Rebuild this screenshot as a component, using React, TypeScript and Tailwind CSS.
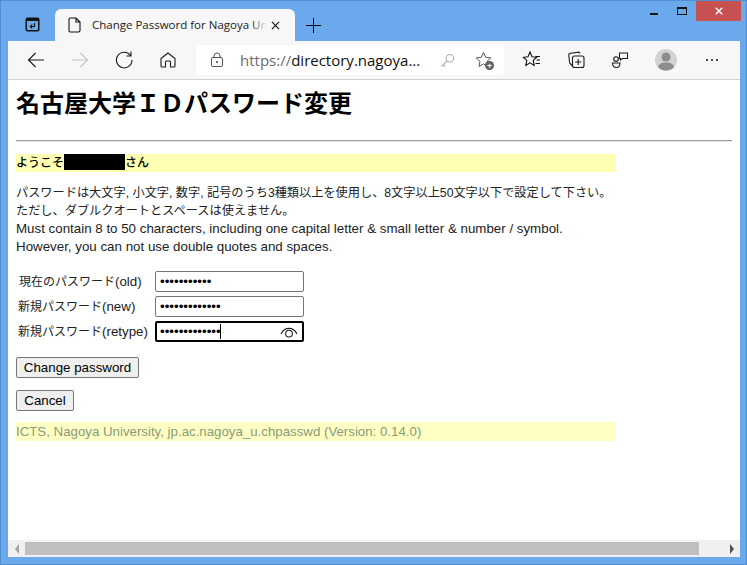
const uiFont = { fontFamily: '"Open Sans", "Noto Sans", sans-serif' };

const Icon = ({ children, className = "w-5 h-5" }: { children: React.ReactNode; className?: string }) => (
  <svg viewBox="0 0 20 20" fill="none" stroke="currentColor" strokeWidth="1.1" className={className}>
    {children}
  </svg>
);

const ToolButton = ({ children, className = "" }: { children: React.ReactNode; className?: string }) => (
  <div className={`flex h-[30px] w-[44px] shrink-0 items-center justify-center text-[#1c1c1c] ${className}`}>{children}</div>
);

const PasswordRow = ({ label, tag, length, focused, indent }: { label: string; tag: string; length: number; focused?: boolean; indent: string }) => (
  <div className="flex h-[25px] items-center">
    <label className={`w-[139px] text-[12px] whitespace-nowrap text-[#222] ${indent}`}>
      {label}
      <span className="text-[13.33px]">{tag}</span>
    </label>
    <div className="relative">
      <input
        type="password"
        readOnly
        value={"x".repeat(length)}
        className={`block h-[21px] w-[149px] rounded-[2px] bg-white px-[4px] text-[13.33px] text-black outline-none ${
          focused ? "border-2 border-black pl-[3px]" : "border border-[#767676]"
        }`}
      />
      {focused && (
        <>
          <span className="absolute top-[3px] left-[65px] h-[15px] w-px bg-black" />
          <svg viewBox="0 0 20 14" fill="none" stroke="#222" strokeWidth="1.1" className="absolute top-[4px] right-[5px] h-[14px] w-[20px]">
            <path d="M2 9C4 5 7 3.4 10 3.4S16 5 18 9" />
            <circle cx="10" cy="8.6" r="3.4" />
          </svg>
        </>
      )}
    </div>
  </div>
);

export default function App() {
  return (
    <div
      className="flex h-[565px] w-[747px] flex-col overflow-hidden border border-[#4f8fd0] bg-[#69a9ec]"
      style={uiFont}
    >
      {/* title bar + tabs */}
      <div className="relative flex h-[40px] shrink-0 items-end pl-[7px]">
        <div className="flex h-[32px] w-[47px] items-center justify-end pr-[15px] pb-[1px]">
          <svg viewBox="0 0 15 15" className="h-[15px] w-[15px]" fill="none">
            <rect x="0.5" y="0.5" width="14" height="14" rx="2" fill="#111" />
            <rect x="2" y="4" width="11" height="9" fill="#69a9ec" />
            <path d="M9.5 6v3.5H5.5M7.2 7.6L5.3 9.5l1.9 1.9" stroke="#111" strokeWidth="1.1" />
          </svg>
        </div>
        <div className="flex h-[32px] w-[240px] items-center rounded-t-[6px] bg-[#f7f7f7] pl-[13px]">
          <svg viewBox="0 0 14 16" fill="none" stroke="#111" strokeWidth="1.1" className="h-[16px] w-[14px] shrink-0">
            <path d="M2.5 1h5.5l4 4v8.5a1.5 1.5 0 0 1-1.5 1.5h-8A1.5 1.5 0 0 1 1 13.500V2.500A1.500 1.500 0 0 1 2.500 1zM8 1v4h4" />
          </svg>
          <span className="relative ml-[10px] w-[175px] overflow-hidden text-[11.5px] whitespace-nowrap text-[#222]">
            Change Password for Nagoya Un
            <span className="absolute top-0 right-0 h-full w-[16px] bg-gradient-to-r from-transparent to-[#f7f7f7]" />
          </span>
          <svg viewBox="0 0 10 10" stroke="#111" strokeWidth="1.2" className="ml-[4px] h-[9px] w-[9px] shrink-0">
            <path d="M1 1l8 8M9 1l-8 8" />
          </svg>
        </div>
        <div className="flex h-[32px] w-[37px] items-center justify-center">
          <svg viewBox="0 0 15 15" stroke="#000" strokeWidth="1" shapeRendering="crispEdges" className="h-[15px] w-[15px]">
            <path d="M7.500 0v15M0 7.500h15" />
          </svg>
        </div>
        {/* window controls */}
        <div className="absolute top-0 right-[5px] flex items-start">
          <div className="flex h-[20px] w-[28px] items-center justify-center">
            <span className="mt-[5px] h-[2px] w-[8px] bg-[#111]" />
          </div>
          <div className="flex h-[20px] w-[28px] items-center justify-center">
            <span className="h-[8px] w-[10px] border border-t-2 border-[#111]" />
          </div>
          <div className="flex h-[20px] w-[45px] items-center justify-center bg-[#c75050]">
            <svg viewBox="0 0 10 10" stroke="#fff" strokeWidth="1.800" className="h-[8px] w-[8px]">
              <path d="M1 1l8 8M9 1l-8 8" />
            </svg>
          </div>
        </div>
      </div>

      {/* window body */}
      <div className="mr-[6px] ml-[7px] flex min-h-0 flex-1 flex-col bg-white">
        {/* toolbar */}
        <div className="flex h-[39px] shrink-0 items-center border-b border-[#d2d2d2] bg-[#f7f7f7] pl-[6px]">
          <ToolButton>
            <Icon><path d="M18 10H2.500M9.500 3l-7 7 7 7" /></Icon>
          </ToolButton>
          <ToolButton className="text-[#c4c4c4]">
            <Icon><path d="M2 10h15.500M10.500 3l7 7-7 7" /></Icon>
          </ToolButton>
          <ToolButton>
            <Icon><path d="M16.500 5.500A7.800 7.800 0 1 0 18 10M17 1.500v4.500h-4.500" /></Icon>
          </ToolButton>
          <ToolButton>
            <Icon><path d="M3 8.500L10 3l7 5.500V16a1 1 0 0 1-1 1h-3.500v-5a1 1 0 0 0-1-1h-3a1 1 0 0 0-1 1v5H4a1 1 0 0 1-1-1z" /></Icon>
          </ToolButton>
          <div className="ml-[6px] flex h-[30px] w-[308px] shrink-0 items-center rounded-[4px] bg-white pl-[14px]">
            <svg viewBox="0 0 14 16" fill="none" stroke="#555" strokeWidth="1" className="h-[16px] w-[14px] shrink-0">
              <rect x="1.500" y="5.500" width="11" height="9" rx="1.500" />
              <path d="M4 5.500V4a3 3 0 0 1 6 0v1.500" />
              <circle cx="7" cy="10" r="0.700" fill="#555" />
            </svg>
            <span className="ml-[16px] w-[182px] text-[15px] whitespace-nowrap text-[#111]">
              <span className="text-[#6b6b6b]">https://</span>directory.nagoya...
            </span>
            <svg viewBox="0 0 16 16" fill="none" stroke="#a8a8a8" strokeWidth="1.100" className="ml-[18px] h-[15px] w-[15px] shrink-0">
              <circle cx="10.500" cy="5.500" r="4" />
              <path d="M7.500 8.500L1.500 14.500M3.500 12.500l2 2" />
            </svg>
            <div className="relative ml-[20px] h-[18px] w-[18px] shrink-0">
              <svg viewBox="0 0 18 18" fill="none" stroke="#555" strokeWidth="1" className="h-[18px] w-[18px]">
                <path d="M8.500 1.500l2.200 4.800 5.100.6-3.800 3.500 1 5.100-4.500-2.600-4.500 2.600 1-5.100L1.300 6.900l5.100-.6z" />
              </svg>
              <span className="absolute right-[-1px] bottom-[-1px] flex h-[9px] w-[9px] items-center justify-center rounded-full bg-[#5f5f5f] text-[9px] leading-none font-bold text-white">
                +
              </span>
            </div>
          </div>
          <div className="ml-[6px] flex">
            <ToolButton>
              <svg viewBox="0 0 20 20" fill="none" stroke="#111" strokeWidth="1.100" className="h-5 w-5">
                <path d="M8 2l2 4.800 4.500.5-3.300 3.100 1 5-4.200-2.500-4.200 2.500 1-5L1.500 7.300 6 6.800zM13.500 6.500H18M14.500 10H18M13.500 13.500H18" />
              </svg>
            </ToolButton>
            <ToolButton>
              <Icon>
                <rect x="6.500" y="6" width="11.500" height="11.500" rx="2" />
                <path d="M12.200 9v6M9.200 12h6M14 3.500l-1-1.300-8.500 1a2 2 0 0 0-1.700 2.200L3.700 13l2.800 3" />
              </Icon>
            </ToolButton>
            <ToolButton>
              <Icon>
                <circle cx="6" cy="9" r="2.300" />
                <path d="M2.500 13h7.500c0 3-1.500 4.500-3.700 4.500S2.500 16 2.500 13zM9.500 3h8v5.500h-5l-2 1.500v-1.500h-1z" />
              </Icon>
            </ToolButton>
            <div className="flex h-[30px] w-[48px] shrink-0 items-center justify-center">
              <svg viewBox="0 0 22 22" className="h-[22px] w-[22px]">
                <circle cx="11" cy="11" r="11" fill="#d3d2d1" />
                <circle cx="11" cy="8" r="4.500" fill="#8f8d8b" />
                <path d="M3 18c1-3.500 4-4.500 8-4.500s7 1 8 4.500a11 11 0 0 1-16 0z" fill="#8f8d8b" />
              </svg>
            </div>
            <ToolButton>
              <span className="mt-[-1px] flex gap-[3px]">
                <span className="h-[2px] w-[2px] rounded-full bg-[#111]" />
                <span className="h-[2px] w-[2px] rounded-full bg-[#111]" />
                <span className="h-[2px] w-[2px] rounded-full bg-[#111]" />
              </span>
            </ToolButton>
          </div>
        </div>

        {/* page */}
        <div
          className="min-h-0 flex-1 overflow-hidden px-[8px] pt-[8px]"
          style={{ fontFamily: '"Liberation Sans", "Noto Sans CJK JP", sans-serif' }}
        >
          <h1 className="h-[32px] text-[24px] leading-[32px] font-bold text-black">名古屋大学ＩＤパスワード変更</h1>
          <hr className="mt-[20px] h-[2px] border-t border-b-0 border-[#9a9a9a] bg-[#e8e8e8]" />
          <div className="mt-[12px] flex h-[18px] w-[600px] items-start bg-[#ffffb3] text-[12px] leading-[18px] font-medium text-black">
            ようこそ<span className="inline-block h-[16px] w-[61px] bg-black" />さん
          </div>
          <p className="mt-[12px] w-[620px] text-[13.33px] leading-[18px] whitespace-nowrap text-[#222]">
            <span className="text-[12.2px]">パスワードは大文字, 小文字, 数字, 記号のうち3種類以上を使用し、8文字以上50文字以下で設定して下さい。</span>
            <br />
            <span className="text-[12.2px]">ただし、ダブルクオートとスペースは使えません。</span>
            <br />
            Must contain 8 to 50 characters, including one capital letter &amp; small letter &amp; number / symbol.
            <br />
            However, you can not use double quotes and spaces.
          </p>
          <div className="mt-[13px] flex flex-col">
            <PasswordRow label="現在のパスワード" tag="(old)" length={11} indent="pl-[3px]" />
            <PasswordRow label="新規パスワード" tag="(new)" length={13} indent="pl-[2px]" />
            <PasswordRow label="新規パスワード" tag="(retype)" length={13} indent="pl-[2px]" focused />
          </div>
          <button className="mt-[13px] block h-[21px] w-[123px] rounded-[2px] border border-[#767676] bg-[#efefef] text-[13.33px] leading-none text-black">
            Change password
          </button>
          <button className="mt-[12px] block h-[21px] w-[58px] rounded-[2px] border border-[#767676] bg-[#efefef] text-[13.33px] leading-none text-black">
            Cancel
          </button>
          <div className="mt-[11px] flex h-[19px] w-[600px] items-center bg-[#ffffc4] text-[13.27px] text-[#8a9a7c]">
            ICTS, Nagoya University, jp.ac.nagoya_u.chpasswd (Version: 0.14.0)
          </div>
        </div>

        {/* horizontal scrollbar */}
        <div className="flex h-[17px] shrink-0 items-center bg-[#f0f0f0]">
          <div className="flex h-full w-[17px] items-center justify-center">
            <span className="h-0 w-0 border-y-[5px] border-r-[4px] border-y-transparent border-r-[#a3a3a3]" />
          </div>
          <div className="h-[13px] w-[674px] bg-[#bfbfbf]" />
          <div className="flex-1" />
          <div className="flex h-full w-[17px] items-center justify-center">
            <span className="h-0 w-0 border-y-[5px] border-l-[4px] border-y-transparent border-l-[#505050]" />
          </div>
        </div>
      </div>
      <div className="h-[7px] shrink-0" />
    </div>
  );
}
